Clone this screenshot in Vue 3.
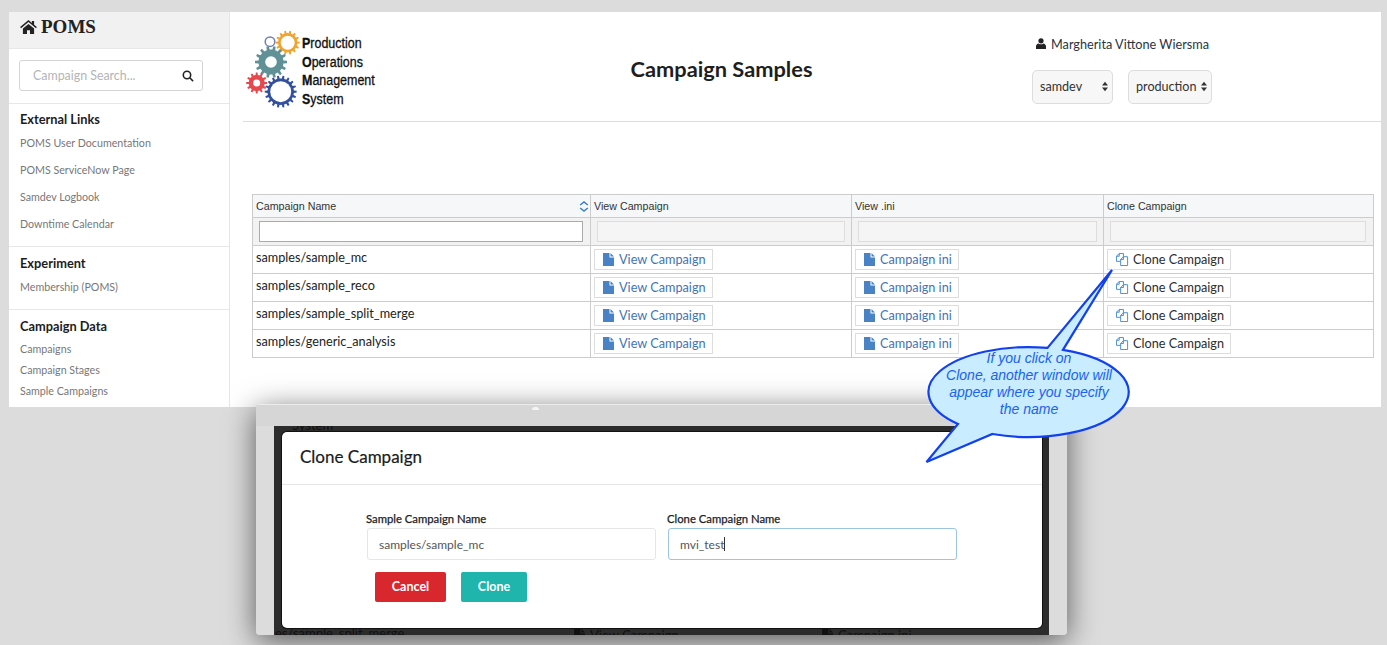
<script setup>
const sections = [
  { title: 'External Links', tight: false, links: ['POMS User Documentation', 'POMS ServiceNow Page', 'Samdev Logbook', 'Downtime Calendar'] },
  { title: 'Experiment', tight: false, links: ['Membership (POMS)'] },
  { title: 'Campaign Data', tight: true, links: ['Campaigns', 'Campaign Stages', 'Sample Campaigns'] }
]

const campaigns = ['samples/sample_mc', 'samples/sample_reco', 'samples/sample_split_merge', 'samples/generic_analysis']

// toothed ring, the logo is just four of these
function gear(cx, cy, outer, root, teeth) {
  let d = ''
  const step = (Math.PI * 2) / teeth
  for (let i = 0; i < teeth; i++) {
    const a = i * step
    const pts = [
      [root, a - step * 0.5],
      [root, a - step * 0.26],
      [outer, a - step * 0.16],
      [outer, a + step * 0.16],
      [root, a + step * 0.26]
    ]
    for (const [r, t] of pts) {
      d += (d ? 'L' : 'M') + (cx + r * Math.cos(t)).toFixed(2) + ' ' + (cy + r * Math.sin(t)).toFixed(2)
    }
  }
  return d + 'Z'
}

const gears = [
  { d: gear(41.7, 12.7, 12, 9.6, 14), hole: 7, x: 41.7, y: 12.7, color: '#f0a42e' },
  { d: gear(25, 32, 16, 12.5, 14), hole: 5.8, x: 25, y: 32, color: '#5f9196' },
  { d: gear(10.7, 53, 10.5, 8, 12), hole: 3.5, x: 10.7, y: 53, color: '#e5484d' },
  { d: gear(34.7, 61.7, 16, 13.2, 18), hole: 10.5, x: 34.7, y: 61.7, color: '#33509f' }
]
</script>

<template>
  <div class="page">
    <div class="shell">
      <aside class="sidebar">
        <div class="brand">
          <svg class="home" viewBox="0 0 18 15"><path d="M9 0 0 7.6l1 1.2L9 2.2l8 6.6 1-1.2-3-2.5V1h-2.4v2.2zM3 9.2V15h4.4v-4h3.2v4H15V9.2L9 4.2z" /></svg>
          POMS
        </div>
        <div class="search">
          <span class="search-text">Campaign Search...</span>
          <svg class="search-icon" viewBox="0 0 13 13"><circle cx="5.4" cy="5.4" r="4" /><path d="M8.4 8.4 12 12" /></svg>
        </div>
        <section v-for="s in sections" :key="s.title" class="side-section" :class="{ tight: s.tight }">
          <h4>{{ s.title }}</h4>
          <a v-for="link in s.links" :key="link">{{ link }}</a>
        </section>
      </aside>

      <main class="main">
        <header class="top">
          <div class="logo">
            <svg class="gears" width="58" height="80" viewBox="0 0 58 80">
              <circle cx="24" cy="11.7" r="4.8" fill="none" stroke="#6f7fb8" stroke-width="1.5" />
              <g v-for="g in gears" :key="g.color">
                <path :d="g.d" :fill="g.color" />
                <circle :cx="g.x" :cy="g.y" :r="g.hole" fill="#fff" />
              </g>
            </svg>
            <div class="logo-text">
              <div><b>P</b>roduction</div>
              <div><b>O</b>perations</div>
              <div><b>M</b>anagement</div>
              <div><b>S</b>ystem</div>
            </div>
          </div>
          <h1>Campaign Samples</h1>
          <div class="account">
            <div class="user">
              <svg viewBox="0 0 10 11"><circle cx="5" cy="2.8" r="2.6" /><path d="M0 11V8.4C0 6.6 1.4 5.6 2.6 5.4 3.3 6 4.1 6.3 5 6.3s1.7-.3 2.4-.9C8.6 5.6 10 6.6 10 8.4V11z" /></svg>
              Margherita Vittone Wiersma
            </div>
            <div class="selects">
              <div class="select wide">samdev<svg viewBox="0 0 7 11"><path d="M3.5 0 7 4.4H0zM3.5 11 0 6.6h7z" /></svg></div>
              <div class="select">production<svg viewBox="0 0 7 11"><path d="M3.5 0 7 4.4H0zM3.5 11 0 6.6h7z" /></svg></div>
            </div>
          </div>
        </header>

        <table class="grid">
          <colgroup>
            <col class="col-name" />
            <col class="col-view" />
            <col class="col-ini" />
            <col />
          </colgroup>
          <thead>
            <tr class="head">
              <th>
                <div class="sortable">
                  Campaign Name
                  <svg viewBox="0 0 10 11"><path d="M1.2 4 5 1l3.800 3M1.2 7 5 10l3.800-3" /></svg>
                </div>
              </th>
              <th>View Campaign</th>
              <th>View .ini</th>
              <th>Clone Campaign</th>
            </tr>
            <tr class="filters">
              <td><input type="text" class="live" /></td>
              <td><input type="text" disabled /></td>
              <td><input type="text" disabled /></td>
              <td><input type="text" disabled /></td>
            </tr>
          </thead>
          <tbody>
            <tr v-for="c in campaigns" :key="c">
              <td class="name">{{ c }}</td>
              <td>
                <a class="cell-btn">
                  <svg class="doc" viewBox="0 0 11 13"><path d="M0 0h6.500v4.500H11V13H0zM7.500 0 11 3.500H7.500z" /></svg>
                  View Campaign
                </a>
              </td>
              <td>
                <a class="cell-btn">
                  <svg class="doc" viewBox="0 0 11 13"><path d="M0 0h6.500v4.500H11V13H0zM7.500 0 11 3.500H7.500z" /></svg>
                  Campaign ini
                </a>
              </td>
              <td>
                <a class="cell-btn clone">
                  <svg class="copy" viewBox="0 0 14 14"><path d="M.5 9V3.500L3.500.5H8V4M.5 9H5M3.500.5v3h-3M5 13.500V7l3-3h4.500v9.500zM8 4v3H5" /></svg>
                  Clone Campaign
                </a>
              </td>
            </tr>
          </tbody>
        </table>
      </main>
    </div>

    <div class="window">
      <div class="titlebar"></div>
      <div class="window-body">
        <div class="backdrop">
          <span class="peek peek-top">System</span>
          <span class="peek peek-bottom">es/sample_split_merge</span>
          <span class="peek peek-view">
            <svg class="peek-doc" viewBox="0 0 11 13"><path d="M0 0h6.500v4.500H11V13H0zM7.500 0 11 3.500H7.500z" /></svg>
            View Campaign
          </span>
          <span class="peek peek-ini">
            <svg class="peek-doc" viewBox="0 0 11 13"><path d="M0 0h6.500v4.500H11V13H0zM7.500 0 11 3.500H7.500z" /></svg>
            Campaign ini
          </span>
          <div class="dialog">
            <div class="dialog-head">Clone Campaign</div>
            <div class="dialog-body">
              <div class="fields">
                <label>
                  <span>Sample Campaign Name</span>
                  <input type="text" value="samples/sample_mc" readonly />
                </label>
                <label class="focused">
                  <span>Clone Campaign Name</span>
                  <div class="fake-input">mvi_test<i></i></div>
                </label>
              </div>
              <div class="actions">
                <button class="cancel">Cancel</button>
                <button class="ok">Clone</button>
              </div>
            </div>
          </div>
        </div>
      </div>
    </div>

    <svg class="callout" width="220" height="204" viewBox="0 0 220 204">
      <path
        d="M129.5 79.900 L194 2 L145 81.800 A100 45 0 1 1 74.400 166 L8.500 194 L40 156 A100 45 0 0 1 129.500 79.900 Z"
        fill="#c9ecfe" stroke="#1240f0" stroke-width="2.200" stroke-linejoin="miter"
      />
      <text x="111" y="95">If you click on</text>
      <text x="111" y="112">Clone, another window will</text>
      <text x="111" y="129">appear where you specify</text>
      <text x="111" y="146">the name</text>
    </svg>
  </div>
</template>

<style>
html,
body {
  margin: 0;
  background: #dcdcdc;
}
</style>

<style scoped>
.page {
  position: relative;
  width: 1387px;
  height: 645px;
  overflow: hidden;
  box-sizing: border-box;
  padding: 12px 6px 0 9px;
  background: #dcdcdc;
  font-family: Lato, "Open Sans", sans-serif;
  color: #222;
}
.shell {
  display: flex;
  height: 395px;
  background: #fff;
}
.sidebar {
  width: 220px;
  flex: none;
  border-right: 1px solid #e6e6e6;
}
.brand {
  display: flex;
  align-items: center;
  gap: 4px;
  height: 30px;
  padding: 0 0 6px 11px;
  background: #f1f1f1;
  border-bottom: 1px solid #e7e7e7;
  font: bold 19px "Liberation Serif", serif;
  color: #222;
}
.home {
  width: 17px;
  height: 14px;
  fill: #222;
}
.search {
  display: flex;
  align-items: center;
  justify-content: space-between;
  box-sizing: border-box;
  width: 184px;
  height: 31px;
  margin: 11px 0 12px 10px;
  padding: 0 8px 0 13px;
  border: 1px solid #d4d4d4;
  border-radius: 3px;
  font-size: 12.4px;
  color: #b4b4b4;
}
.search-icon {
  width: 12px;
  height: 12px;
  fill: none;
  stroke: #222;
  stroke-width: 1.7;
}
.side-section {
  border-top: 1px solid #e7e7e7;
  padding: 7px 0 9px 11px;
  display: flex;
  flex-direction: column;
}
.side-section:first-of-type {
  padding-top: 6px;
}
.side-section h4 {
  margin: 0 0 1px;
  height: 18px;
  font-size: 12.8px;
  line-height: 18px;
  font-weight: 700;
  color: #1c1c1c;
}
.side-section a {
  height: 27px;
  font-size: 10.7px;
  line-height: 27px;
  color: #777;
}
.side-section.tight a {
  height: 21px;
  line-height: 21px;
}
.side-section.tight {
  padding-bottom: 0;
}
.side-section.tight h4 {
  margin-bottom: 3px;
}
.main {
  flex: 1;
  min-width: 0;
}
.top {
  display: grid;
  grid-template-columns: 168px 1fr 349px;
  align-items: start;
  height: 109px;
  margin-left: 13px;
  border-bottom: 1px solid #ddd;
}
.logo {
  display: flex;
  margin: 18px 0 0 3px;
}
.gears {
  flex: none;
}
.logo-text {
  margin: 4px 0 0 -2px;
  font-family: "Liberation Sans", sans-serif;
  font-size: 14px;
  line-height: 18.7px;
  color: #111;
  white-space: nowrap;
  transform: scaleX(0.89);
  transform-origin: left top;
  -webkit-text-stroke: 0.3px #111;
}
.top h1 {
  margin: 45px 0 0;
  text-align: center;
  font-size: 21.8px;
  line-height: 24px;
  font-weight: 700;
  color: #1e1e1e;
}
.account {
  padding-top: 23px;
}
.user {
  display: flex;
  align-items: center;
  gap: 5px;
  margin-left: 4px;
  height: 17px;
  font-size: 12.7px;
  color: #2b3440;
}
.user svg {
  width: 10px;
  height: 11px;
  fill: #222;
}
.selects {
  display: flex;
  gap: 15px;
  margin-top: 18px;
}
.select {
  display: flex;
  align-items: center;
  justify-content: space-between;
  box-sizing: border-box;
  width: 84px;
  height: 34px;
  padding: 0 4px 1px 7px;
  border: 1px solid #ddd;
  border-radius: 5px;
  background: #f7f7f7;
  font-size: 12.6px;
  color: #333;
}
.select.wide {
  width: 81px;
}
.select svg {
  width: 6px;
  height: 11px;
  fill: #333;
}
.grid {
  width: 1122px;
  margin: 72px 0 0 22px;
  border-collapse: collapse;
  table-layout: fixed;
  font-size: 12.7px;
}
.col-name {
  width: 338px;
}
.col-view {
  width: 261px;
}
.col-ini {
  width: 252px;
}
.grid th,
.grid td {
  border: 1px solid #ccc;
  padding: 0 3px;
  overflow: hidden;
}
.head th {
  height: 22px;
  background: #f6f7f8;
  font: 10.7px "Liberation Sans", sans-serif;
  color: #333;
  text-align: left;
}
.sortable {
  display: flex;
  align-items: center;
  justify-content: space-between;
}
.sortable svg {
  width: 10px;
  height: 11px;
  margin-right: -2px;
  fill: none;
  stroke: #3b7fc4;
  stroke-width: 1.5;
}
.filters td {
  height: 27px;
  background: #f2f2f2;
  padding: 0 6px;
}
.filters td:first-child {
  padding-right: 7px;
}
.filters td:last-child {
  padding-right: 7px;
}
.filters input {
  display: block;
  box-sizing: border-box;
  width: 100%;
  height: 21px;
  border: 1px solid #ddd;
  background: #f5f5f5;
  margin: 0;
  padding: 0;
}
.filters input.live {
  background: #fff;
  border-color: #aaa;
}
.grid tbody td {
  height: 27px;
}
.grid tbody td.name {
  vertical-align: top;
  padding-top: 3px;
  height: 24px;
  color: #222;
}
.cell-btn {
  display: inline-flex;
  align-items: center;
  vertical-align: middle;
  box-sizing: border-box;
  height: 21px;
  padding: 0 6px 1px 8px;
  gap: 5px;
  border: 1px solid #ddd;
  background: #fff;
  color: #3f74b4;
  white-space: nowrap;
}
.cell-btn.clone {
  color: #2c2c2c;
  gap: 4px;
}
.doc {
  width: 11px;
  height: 13px;
  fill: #4a83c5;
}
.copy {
  width: 13px;
  height: 13px;
  fill: none;
  stroke: #3f89c9;
  stroke-width: 1;
}
.window {
  position: relative;
  width: 811px;
  height: 231px;
  margin: -3px 0 0 247px;
  border-radius: 4px;
  overflow: hidden;
  background: #d6d6d6;
  box-shadow: 0 6px 30px rgba(0, 0, 0, 0.6);
}
.titlebar {
  position: relative;
  height: 21px;
  border-top: 1px solid #ececec;
  background: #d6d6d6;
}
.titlebar::after {
  content: '';
  position: absolute;
  left: 276px;
  top: 2px;
  width: 7px;
  height: 3px;
  border-radius: 4px 4px 0 0;
  background: #f4f4f4;
}
.window-body {
  height: 209px;
  padding: 0 18px;
  background: #dcdcdc;
}
.backdrop {
  position: relative;
  box-sizing: border-box;
  height: 209px;
  padding: 6px 7px 7px 8px;
  background: #2c2c2c;
  overflow: hidden;
}
.peek {
  position: absolute;
  display: flex;
  align-items: center;
  gap: 5px;
  font-size: 13px;
  color: #111;
  white-space: nowrap;
}
.peek-doc {
  width: 11px;
  height: 13px;
  fill: #111;
}
.peek-top {
  left: 18px;
  top: -9px;
}
.peek-bottom {
  left: 1px;
  bottom: -6px;
}
.peek-view {
  left: 300px;
  bottom: -8px;
}
.peek-ini {
  left: 548px;
  bottom: -8px;
}
.dialog {
  position: relative;
  box-sizing: border-box;
  height: 196px;
  background: #fff;
  border-radius: 5px;
  box-shadow: 0 0 0 1px #111;
}
.dialog-head {
  height: 52px;
  padding-left: 18px;
  border-bottom: 1px solid #e5e5e5;
  font-size: 17px;
  line-height: 50px;
  color: #1a1a1a;
  -webkit-text-stroke: 0.2px #1a1a1a;
}
.dialog-body {
  padding: 26px 0 0 85px;
}
.fields {
  display: flex;
  gap: 12px;
}
.fields label {
  display: flex;
  flex-direction: column;
  width: 289px;
}
.fields label span {
  height: 17px;
  margin-left: -1px;
  font-size: 11.3px;
  line-height: 15px;
  color: #222;
  -webkit-text-stroke: 0.25px #222;
}
.fields input,
.fake-input {
  box-sizing: border-box;
  width: 100%;
  height: 32px;
  margin: 0;
  padding: 0 11px;
  border: 1px solid #e6e6e6;
  border-radius: 3px;
  background: #fff;
  font: 12px Lato, sans-serif;
  color: #555;
  outline: none;
}
.fake-input {
  display: flex;
  align-items: center;
  border-color: #9cc4e4;
}
.fake-input i {
  width: 1px;
  height: 14px;
  background: #333;
}
.actions {
  display: flex;
  gap: 15px;
  margin: 12px 0 0 8px;
}
.actions button {
  height: 30px;
  padding: 0 0 2px;
  border: 1px solid transparent;
  border-radius: 2px;
  color: #fff;
  font: 700 12.5px Lato, sans-serif;
}
.cancel {
  width: 71px;
  background: #d9272e;
}
.ok {
  width: 66px;
  background: #1fb5ad;
}
.callout {
  position: absolute;
  left: 918px;
  top: 268px;
}
.callout text {
  font: italic 14px "Liberation Sans", sans-serif;
  fill: #1a62f0;
  text-anchor: middle;
}
</style>
